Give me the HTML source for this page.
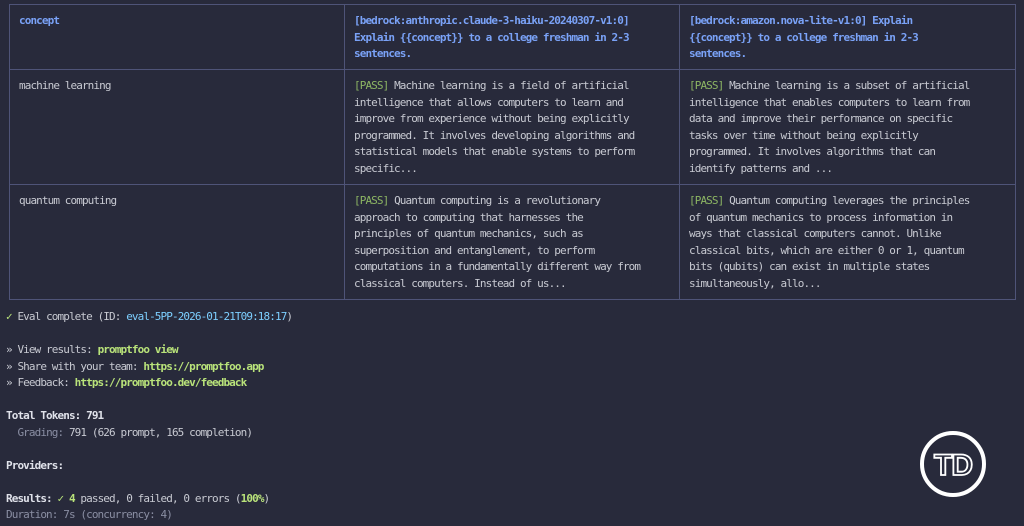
<!DOCTYPE html>
<html><head><style>
body{margin:0;background:#282a3b;width:1024px;height:526px;overflow:hidden;font-family:"DejaVu Sans Mono","Liberation Mono",monospace;font-size:11px;letter-spacing:-0.9px;color:#c8cad2;}
table{position:absolute;left:9px;top:4px;border-collapse:collapse;}
td{border:1px solid #4f5478;vertical-align:top;padding:8px 9px 0 9px;line-height:16.5px;white-space:pre;}
.h{color:#7aa2f7;font-weight:bold;}
.p{color:#9ece6a;opacity:.85}
.out{position:absolute;left:6px;top:309px;line-height:16.5px;white-space:pre;}
.g{color:#b9e37a;font-weight:bold}
.c{color:#7dcfff}
.dim{color:#8a8ea3}
b{color:#e0e2ea}
</style></head><body>
<table>
<tr style="height:65px"><td style="width:316px" class="h">concept</td><td style="width:316px" class="h">[bedrock:anthropic.claude-3-haiku-20240307-v1:0]
Explain {{concept}} to a college freshman in 2-3
sentences.</td><td style="width:317px" class="h">[bedrock:amazon.nova-lite-v1:0] Explain
{{concept}} to a college freshman in 2-3
sentences.</td></tr>
<tr style="height:115px"><td>machine learning</td><td><span class="p">[PASS]</span> Machine learning is a field of artificial
intelligence that allows computers to learn and
improve from experience without being explicitly
programmed. It involves developing algorithms and
statistical models that enable systems to perform
specific...</td><td><span class="p">[PASS]</span> Machine learning is a subset of artificial
intelligence that enables computers to learn from
data and improve their performance on specific
tasks over time without being explicitly
programmed. It involves algorithms that can
identify patterns and ...</td></tr>
<tr style="height:115px"><td>quantum computing</td><td><span class="p">[PASS]</span> Quantum computing is a revolutionary
approach to computing that harnesses the
principles of quantum mechanics, such as
superposition and entanglement, to perform
computations in a fundamentally different way from
classical computers. Instead of us...</td><td><span class="p">[PASS]</span> Quantum computing leverages the principles
of quantum mechanics to process information in
ways that classical computers cannot. Unlike
classical bits, which are either 0 or 1, quantum
bits (qubits) can exist in multiple states
simultaneously, allo...</td></tr>
</table>
<div class="out"><span class="g" style="font-weight:normal">✓</span> Eval complete (ID: <span class="c">eval-5PP-2026-01-21T09:18:17</span>)

» View results: <span class="g">promptfoo view</span>
» Share with your team: <span class="g">https://promptfoo.app</span>
» Feedback: <span class="g">https://promptfoo.dev/feedback</span>

<b>Total Tokens: 791</b>
  <span class="dim">Grading:</span> 791 (626 prompt, 165 completion)

<b>Providers:</b>

<b>Results:</b> <span class="g">✓ 4</span> passed, 0 failed, 0 errors (<span class="g">100%</span>)
<span class="dim">Duration: 7s (concurrency: 4)</span></div>
<svg style="position:absolute;left:918px;top:430px" width="70" height="70" viewBox="0 0 70 70">
<circle cx="35" cy="34" r="31" fill="none" stroke="#fff" stroke-width="4"/>
<text x="35" y="45" text-anchor="middle" font-family="Liberation Sans" font-weight="bold" font-size="30" letter-spacing="-1" fill="none" stroke="#fff" stroke-width="1.8">TD</text>
</svg>
</body></html>
